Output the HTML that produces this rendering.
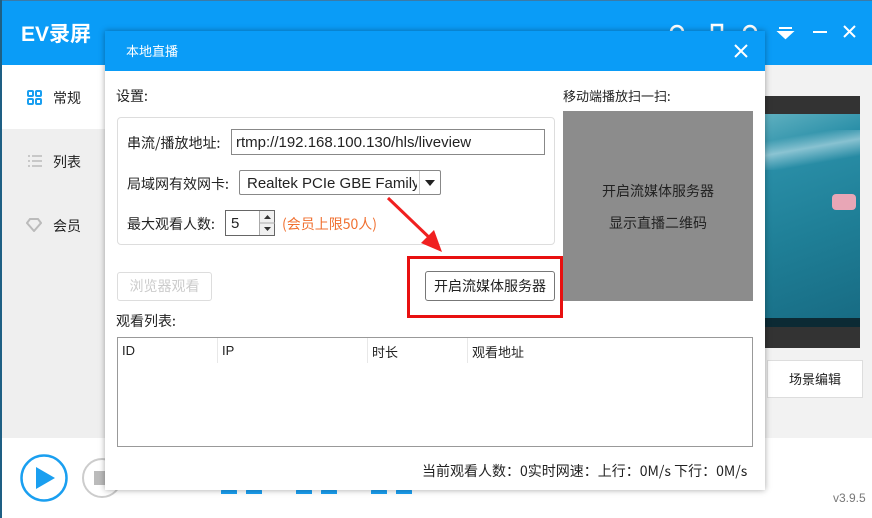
<!DOCTYPE html>
<html><head><meta charset="utf-8"><style>
*{margin:0;padding:0;box-sizing:border-box}
body{width:872px;height:518px;position:relative;overflow:hidden;background:#fff;font-family:"Liberation Sans","Noto Sans CJK SC",sans-serif;font-size:14px;color:#222}
.a{position:absolute}
.cj{font-family:"Noto Sans CJK SC",sans-serif}
</style></head><body>
<div class="a" style="left:0;top:0;width:872px;height:65px;background:#0a9cf7;border-top:1px solid #3a7aa8"></div>
<div class="a" style="left:0;top:0;width:2px;height:518px;background:#1e5f84"></div>
<div class="a" style="left:21px;top:18px;color:#fff;font-size:21px;font-weight:bold">EV<span class="cj" style="font-weight:bold">录屏</span></div>
<svg class="a" style="left:660px;top:18px" width="210" height="30">
<circle cx="17" cy="14" r="6" fill="none" stroke="#fff" stroke-width="2.5"/>
<rect x="52" y="7" width="10" height="12" fill="none" stroke="#fff" stroke-width="2.5"/>
<circle cx="90" cy="14" r="6" fill="none" stroke="#fff" stroke-width="2.5"/>
<path d="M119 10h13M119 14h13l-6.5 6z" stroke="#fff" stroke-width="2" fill="#fff"/>
<path d="M153 14h14" stroke="#fff" stroke-width="2"/>
<path d="M184 8l11 11M195 8l-11 11" stroke="#fff" stroke-width="2"/>
</svg>
<div class="a" style="left:2px;top:65px;width:103px;height:373px;background:#efefef"></div>
<div class="a" style="left:2px;top:65px;width:103px;height:64px;background:#fff"></div>
<div class="a" style="left:105px;top:65px;width:767px;height:373px;background:#f2f2f2"></div>
<svg class="a" style="left:27px;top:90px" width="16" height="16"><g fill="none" stroke="#1a9ff0" stroke-width="2"><rect x="1" y="1" width="5" height="5" rx="1"/><rect x="9" y="1" width="5" height="5" rx="1"/><rect x="1" y="9" width="5" height="5" rx="1"/><rect x="9" y="9" width="5" height="5" rx="1"/></g></svg>
<div class="a cj" style="left:53px;top:88px;font-size:14px">常规</div>
<svg class="a" style="left:27px;top:154px" width="16" height="16"><path d="M1 2h2M5 2h10M1 7h2M5 7h10M1 12h2M5 12h10" stroke="#bbb" stroke-width="1.5"/></svg>
<div class="a cj" style="left:53px;top:152px">列表</div>
<svg class="a" style="left:26px;top:218px" width="16" height="14"><path d="M1 5l3-4h8l3 4-7 8z" fill="none" stroke="#bbb" stroke-width="2"/></svg>
<div class="a cj" style="left:53px;top:216px">会员</div>
<div class="a" style="left:765px;top:96px;width:95px;height:252px;background:#333"></div>
<div class="a" style="left:765px;top:114px;width:95px;height:213px;background:linear-gradient(160deg,#5fb0c0 0%,#2a8fa8 20%,#1f7f97 55%,#176a82 100%)"></div>
<div class="a" style="left:765px;top:130px;width:95px;height:40px;background:linear-gradient(170deg,transparent 20%,rgba(230,245,250,.5) 45%,transparent 75%)"></div>
<div class="a" style="left:832px;top:194px;width:24px;height:16px;background:#e8a6b6;border-radius:4px"></div>
<div class="a" style="left:765px;top:318px;width:95px;height:9px;background:#0c2a34"></div>
<div class="a cj" style="left:767px;top:360px;width:96px;height:38px;background:#fff;border:1px solid #ddd;text-align:center;line-height:36px;font-size:13px">场景编辑</div>
<svg class="a" style="left:20px;top:454px" width="50" height="50"><circle cx="24" cy="24" r="22.5" fill="#fff" stroke="#1a9ff0" stroke-width="2.5"/><path d="M16 13v22l19-11z" fill="#1a9ff0"/></svg>
<svg class="a" style="left:80px;top:456px" width="40" height="46"><circle cx="22" cy="22" r="19" fill="#fff" stroke="#ccc" stroke-width="2"/><rect x="14" y="15" width="14" height="14" fill="#bbb"/></svg>
<div class="a" style="left:221px;top:488px;width:190px;height:8px">
<div class="a" style="left:0;width:16px;height:6px;background:#1a9ff0;border-radius:3px 3px 0 0"></div><div class="a" style="left:25px;width:16px;height:6px;background:#1a9ff0;border-radius:3px 3px 0 0"></div>
<div class="a" style="left:75px;width:16px;height:6px;background:#1a9ff0;border-radius:3px 3px 0 0"></div><div class="a" style="left:100px;width:16px;height:6px;background:#1a9ff0;border-radius:3px 3px 0 0"></div>
<div class="a" style="left:150px;width:16px;height:6px;background:#1a9ff0;border-radius:3px 3px 0 0"></div><div class="a" style="left:175px;width:16px;height:6px;background:#1a9ff0;border-radius:3px 3px 0 0"></div>
</div>
<div class="a" style="left:833px;top:491px;font-size:12px;color:#777">v3.9.5</div>

<div class="a" style="left:105px;top:31px;width:660px;height:459px;background:#fff;box-shadow:0 0 6px rgba(0,0,0,.35)"></div>
<div class="a" style="left:105px;top:31px;width:660px;height:40px;background:#0a9cf7"></div>
<div class="a cj" style="left:126px;top:41px;color:#fff;font-size:13px">本地直播</div>
<svg class="a" style="left:733px;top:43px" width="16" height="16"><path d="M2 2l12 12M14 2L2 14" stroke="#fff" stroke-width="2"/></svg>
<div class="a cj" style="left:116px;top:86px">设置:</div>
<div class="a cj" style="left:563px;top:86px;font-size:13px">移动端播放扫一扫:</div>
<div class="a" style="left:117px;top:117px;width:438px;height:128px;border:1px solid #ddd;border-radius:4px"></div>
<div class="a cj" style="left:127px;top:133px">串流/播放地址:</div>
<div class="a" style="left:231px;top:129px;width:314px;height:26px;border:1px solid #888;padding:3px 0 0 4px;line-height:20px;font-size:15px;font-family:'Liberation Sans',sans-serif">rtmp://192.168.100.130/hls/liveview</div>
<div class="a cj" style="left:127px;top:174px">局域网有效网卡:</div>
<div class="a" style="left:239px;top:170px;width:202px;height:25px;border:1px solid #888;border-radius:2px;overflow:hidden">
<div class="a" style="left:7px;top:3px;white-space:nowrap;font-size:15px;width:170px;overflow:hidden;line-height:19px">Realtek PCIe GBE Family C</div>
<div class="a" style="left:179px;top:0;width:1px;height:24px;background:#ccc"></div>
<svg class="a" style="left:184px;top:8px" width="12" height="8"><path d="M1 1h10L6 7z" fill="#222"/></svg></div>
<div class="a cj" style="left:127px;top:214px">最大观看人数:</div>
<div class="a" style="left:225px;top:210px;width:50px;height:26px;border:1px solid #666;padding:3px 0 0 5px;line-height:20px;font-size:15px">5</div>
<div class="a" style="left:259px;top:211px;width:15px;height:24px;border-left:1px solid #aaa;background:#f0f0f0"><svg width="15" height="24"><path d="M4 8l3.5-4 3.5 4z M4 16l3.5 4 3.5-4z" fill="#333"/><path d="M0 12h15" stroke="#aaa"/></svg></div>
<div class="a cj" style="left:282px;top:214px;color:#f07030;font-size:14px">(会员上限50人)</div>
<div class="a cj" style="left:117px;top:272px;width:95px;height:29px;border:1px solid #ddd;border-radius:3px;color:#ccc;text-align:center;line-height:27px">浏览器观看</div>
<svg class="a" style="left:385px;top:195px" width="60" height="60"><path d="M3 3L50 48" stroke="#f02020" stroke-width="3"/><path d="M57 57L36 48l13-13z" fill="#f02020"/></svg>
<div class="a" style="left:407px;top:256px;width:156px;height:62px;border:3px solid #e81010"></div>
<div class="a cj" style="left:425px;top:271px;width:130px;height:30px;border:1px solid #777;border-radius:3px;text-align:center;line-height:28px">开启流媒体服务器</div>
<div class="a" style="left:563px;top:111px;width:190px;height:190px;background:#8c8c8c"></div>
<div class="a cj" style="left:563px;top:181px;width:190px;text-align:center">开启流媒体服务器</div>
<div class="a cj" style="left:563px;top:213px;width:190px;text-align:center">显示直播二维码</div>
<div class="a cj" style="left:116px;top:311px">观看列表:</div>
<div class="a" style="left:117px;top:337px;width:636px;height:110px;border:1px solid #999"></div>
<div class="a" style="left:217px;top:338px;width:1px;height:25px;background:#e8e8e8"></div>
<div class="a" style="left:367px;top:338px;width:1px;height:25px;background:#e8e8e8"></div>
<div class="a" style="left:467px;top:338px;width:1px;height:25px;background:#e8e8e8"></div>
<div class="a" style="left:122px;top:343px;font-size:13px">ID</div>
<div class="a" style="left:222px;top:343px;font-size:13px">IP</div>
<div class="a cj" style="left:372px;top:342px;font-size:13px">时长</div>
<div class="a cj" style="left:472px;top:342px;font-size:13px">观看地址</div>
<div class="a cj" style="left:422px;top:461px;font-size:14px;white-space:nowrap">当前观看人数：0实时网速：上行：0M/s 下行：0M/s</div>
</body></html>
